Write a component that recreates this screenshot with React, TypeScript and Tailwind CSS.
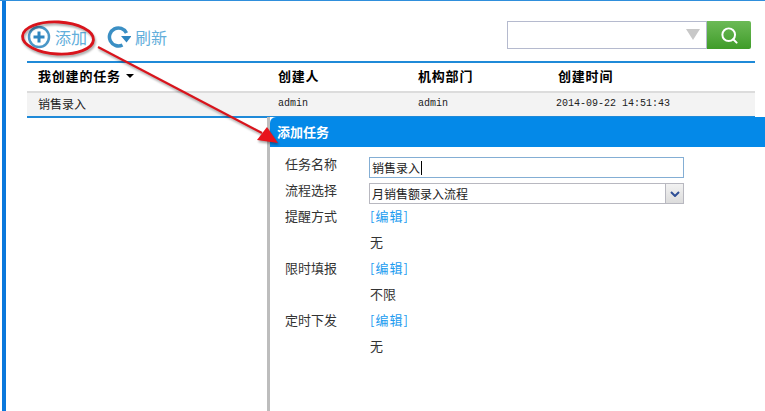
import { Search } from 'lucide-react'

const cjk = "font-['SimSun','Noto_Sans_CJK_SC',sans-serif]"

function FormRow({ label, value }: { label: string; value: string }) {
  return (
    <>
      <div className="flex h-[26px] items-start">
        <span className="w-[85px] text-[13px] leading-[13px] text-[#333]">{label}</span>
        <span className="text-[13px] leading-[13px] tracking-[1px] text-[#1c9cf0]">[编辑]</span>
      </div>
      <div className="h-[26px] pl-[85px] text-[13px] leading-[14px] text-[#333]">{value}</div>
    </>
  )
}

export default function App() {
  return (
    <div className={`relative flex h-[411px] w-full overflow-hidden border-t border-[#2f8fdc] bg-white ${cjk}`}>
      <div className="ml-[2px] w-[4px] shrink-0 bg-[#0a78dc]" />

      <div className="ml-[21px] mr-[10px] flex-1">
        <div className="flex h-[60px] items-start justify-between pr-[4px] pt-[20px]">
          <div className="flex items-center pt-[4px]">
            <svg width="24" height="24" viewBox="0 0 24 24">
              <circle cx="12" cy="12" r="10" fill="none" stroke="#4a97c8" strokeWidth="2.5" />
              <path d="M12 6.5v11M6.5 12h11" stroke="#2f86c0" strokeWidth="3" />
            </svg>
            <span className="ml-[4px] text-[16px] leading-none text-[#62aedb]">添加</span>
            <svg className="ml-[20px]" width="24" height="24" viewBox="0 0 24 24">
              <path d="M15.5 20A9 9 0 1 1 19.5 8" fill="none" stroke="#3b8fc4" strokeWidth="3.5" />
              <path d="M14 11h10.5l-5 6.5z" fill="#2f86c0" />
            </svg>
            <span className="ml-[4px] text-[16px] leading-none text-[#62aedb]">刷新</span>
          </div>
          <div className="flex h-[28px]">
            <div className="flex w-[200px] items-center justify-end border border-[#b5bace] pr-[6px]">
              <svg width="14" height="12" viewBox="0 0 14 12">
                <path d="M0 0h14L7 11z" fill="#c8c8c8" />
              </svg>
            </div>
            <div className="flex w-[44px] items-center justify-center rounded-r-[2px] bg-gradient-to-b from-[#6cba56] to-[#3f9c28]">
              <Search size={19} strokeWidth={2.5} className="text-white" />
            </div>
          </div>
        </div>

        <div className="border-y-2 border-[#1f8ad8]">
          <div className="grid h-[28px] grid-cols-[240px_140px_140px_1fr] items-center pb-[2px] pl-[11px] text-[13px] font-bold tracking-[0.8px] text-black">
            <div className="flex items-center">
              我创建的任务
              <span className="ml-[5px] h-0 w-0 border-x-[4px] border-t-[4px] border-x-transparent border-t-black" />
            </div>
            <div>创建人</div>
            <div>机构部门</div>
            <div>创建时间</div>
          </div>
          <div className="grid h-[25px] grid-cols-[240px_140px_140px_1fr] items-center border-t-2 border-[#dcdcdc] bg-[#f3f3f3] pb-[2px] pl-[11px] text-[12px] text-[#222]">
            <div>销售录入</div>
            <div className="font-['Liberation_Mono',monospace] text-[10px]">admin</div>
            <div className="font-['Liberation_Mono',monospace] text-[10px]">admin</div>
            <div className="-ml-[2px] font-['Liberation_Mono',monospace] text-[10px]">2014-09-22 14:51:43</div>
          </div>
        </div>
      </div>

      {/* dialog sits over the list */}
      <div className="absolute bottom-0 left-[267px] right-0 top-[116px] flex flex-col border-l-[3px] border-[#bdbdbd] bg-white">
        <div className="flex h-[30px] items-center rounded-tl-[6px] bg-[#0489e8] pl-[7px] text-[13px] font-bold text-white">
          添加任务
        </div>
        <div className="pl-[15px] pt-[10px]">
          <div className="flex h-[26px] items-start">
            <span className="w-[84px] text-[13px] leading-[13px] text-[#333]">任务名称</span>
            <div className="flex h-[21px] w-[315px] items-center border border-[#84aed4] pl-[2px] text-[12px] text-[#222]">
              销售录入<span className="ml-[1px] h-[14px] w-px bg-black" />
            </div>
          </div>
          <div className="flex h-[26px] items-start">
            <span className="w-[84px] text-[13px] leading-[13px] text-[#333]">流程选择</span>
            <div className="flex h-[21px] w-[315px] items-center justify-between border border-[#b8b8c0] pl-[2px] text-[12px] text-[#222]">
              月销售额录入流程
              <div className="flex h-full w-[18px] items-center justify-center border-l border-[#b8b8c0] bg-gradient-to-b from-[#f2f2f2] to-[#dcdcdc]">
                <svg width="10" height="6" viewBox="0 0 10 6">
                  <path d="M1 1l4 4 4-4" fill="none" stroke="#2f4f96" strokeWidth="2" />
                </svg>
              </div>
            </div>
          </div>
          <FormRow label="提醒方式" value="无" />
          <FormRow label="限时填报" value="不限" />
          <FormRow label="定时下发" value="无" />
        </div>
      </div>

      {/* red callout drawn on top of the screenshot */}
      <svg className="absolute left-0 top-0 drop-shadow-[1px_2px_1px_rgba(0,0,0,0.35)]" width="765" height="411" viewBox="0 0 765 411">
        <ellipse cx="58" cy="37" rx="35.5" ry="16" fill="none" stroke="#d9141c" strokeWidth="2.8" transform="rotate(3 58 37)" />
        <path d="M98 46L262 132" stroke="#d9141c" strokeWidth="2.2" />
        <path d="M278 142L257 139 267 126z" fill="#e8141c" />
      </svg>
    </div>
  )
}
